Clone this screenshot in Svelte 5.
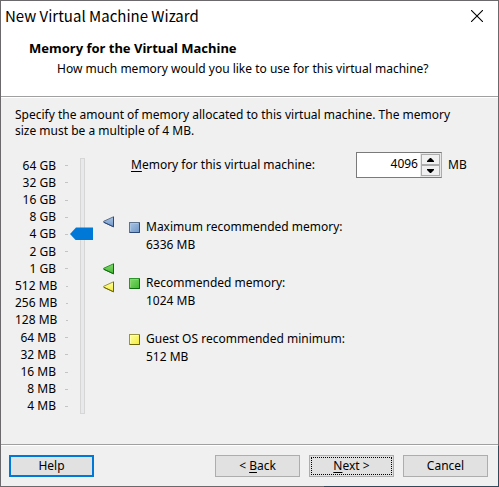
<script>
  const sizes = [
    '64 GB', '32 GB', '16 GB', '8 GB', '4 GB', '2 GB', '1 GB', '512 MB',
    '256 MB', '128 MB', '64 MB', '32 MB', '16 MB', '8 MB', '4 MB'
  ];

  const hints = [
    { id: 'blue', label: 'Maximum recommended memory:', value: '6336 MB', level: 10.75, light: '#a9c4e4', mid: '#6f97c8', edge: '#5f728e', dark: '#2b4878' },
    { id: 'green', label: 'Recommended memory:', value: '1024 MB', level: 8, light: '#86d86f', mid: '#3fb830', edge: '#2c962a', dark: '#0f6a0f' },
    { id: 'yellow', label: 'Guest OS recommended minimum:', value: '512 MB', level: 7, light: '#ffffa8', mid: '#f3ec35', edge: '#9a9440', dark: '#6a6608' }
  ];

  let level = $state(10);
  let memory = $state(4096);

  const slide = () => (memory = 4 * 2 ** level);
  const step = (amount) => (memory = Math.max(4, memory + amount));
</script>

<main class="dialog">
  <header>
    <div class="titlebar">
      <span class="title">New Virtual Machine Wizard</span>
      <button class="close" aria-label="Close">
        <svg width="12" height="12" viewBox="0 0 12 12"><path d="M0 0L12 12M12 0L0 12" stroke="#000" stroke-width="1.1" /></svg>
      </button>
    </div>
    <h1>Memory for the Virtual Machine</h1>
    <p class="question">How much memory would you like to use for this virtual machine?</p>
  </header>

  <section class="body">
    <p class="intro">Specify the amount of memory allocated to this virtual machine. The memory size must be a multiple of 4 MB.</p>

    <div class="content">
      <div class="scale">
        <ol class="sizes">
          {#each sizes as size}
            <li><span>{size}</span><i></i></li>
          {/each}
        </ol>
        <input class="slider" type="range" min="0" max="14" aria-label="Memory size" bind:value={level} oninput={slide} />
        <div class="markers">
          {#each hints as hint}
            <svg class="marker" style="top: {((14 - hint.level) / 14) * 100}%" width="11" height="12" viewBox="0 0 11 12">
              <defs>
                <linearGradient id="arrow-{hint.id}" x1="0" y1="0" x2="0" y2="1">
                  <stop offset="0" stop-color={hint.light} />
                  <stop offset="1" stop-color={hint.mid} />
                </linearGradient>
              </defs>
              <path d="M10.5 .8V10.8L.6 6.3V5.3z" fill="url(#arrow-{hint.id})" stroke={hint.edge} />
              <path d="M10.5 .8V10.8L1 6.3" fill="none" stroke={hint.dark} />
            </svg>
          {/each}
        </div>
      </div>

      <div class="settings">
        <div class="field">
          <label for="memory"><u>M</u>emory for this virtual machine:</label>
          <div class="spinner">
            <input id="memory" type="text" inputmode="numeric" bind:value={memory} />
            <div class="arrows">
              <button aria-label="Increase" onclick={() => step(4)}>
                <svg width="7" height="4" viewBox="0 0 7 4"><path d="M0 4V3L3 0H4L7 3V4z" /></svg>
              </button>
              <button aria-label="Decrease" onclick={() => step(-4)}>
                <svg width="7" height="4" viewBox="0 0 7 4"><path d="M0 0V1L3 4H4L7 1V0z" /></svg>
              </button>
            </div>
          </div>
          <span>MB</span>
        </div>

        <dl>
          {#each hints as hint}
            <div class="hint">
              <svg width="11" height="11" viewBox="0 0 11 11">
                <defs>
                  <linearGradient id="box-{hint.id}" x1="0" y1="0" x2="1" y2="1">
                    <stop offset="0" stop-color={hint.light} />
                    <stop offset="1" stop-color={hint.mid} />
                  </linearGradient>
                </defs>
                <rect x=".5" y=".5" width="10" height="10" fill="url(#box-{hint.id})" stroke={hint.edge} />
                <path d="M10.5 1V10.5H1" fill="none" stroke={hint.dark} />
                <path d="M1.5 9V1.5H9" fill="none" stroke={hint.light} />
              </svg>
              <div>
                <dt>{hint.label}</dt>
                <dd>{hint.value}</dd>
              </div>
            </div>
          {/each}
        </dl>
      </div>
    </div>
  </section>

  <footer>
    <button class="action default">Help</button>
    <button class="action push">&lt; <u>B</u>ack</button>
    <button class="action focused"><u>N</u>ext &gt;</button>
    <button class="action">Cancel</button>
  </footer>
</main>

<style>
  .dialog {
    box-sizing: border-box;
    min-height: 100vh;
    display: flex;
    flex-direction: column;
    border: 1px solid transparent;
    background:
      linear-gradient(#f0f0f0, #f0f0f0) padding-box,
      linear-gradient(#33495a, #33495a) right bottom / 1px 41px no-repeat border-box,
      linear-gradient(#33495a, #33495a) right bottom / 35% 1px no-repeat border-box,
      linear-gradient(#6b696b, #6b696b) border-box;
    color: #000;
    font: 12px/16px 'Noto Sans', sans-serif;
  }
  h1, p, ol, dl, dd {
    margin: 0;
    padding: 0;
  }
  button, input {
    box-sizing: border-box;
    margin: 0;
    padding: 0;
    border: 0;
    color: inherit;
    font: inherit;
  }
  u {
    text-underline-offset: 2px;
  }

  header {
    padding-bottom: 19px;
    border-bottom: 1px solid #a0a0a0;
    background: #fff;
  }
  .titlebar {
    display: flex;
    align-items: center;
    justify-content: space-between;
    height: 30px;
    padding: 0 15px 0 4px;
  }
  .title {
    font: 15px/20px 'Noto Sans CJK KR', sans-serif;
  }
  .close {
    display: flex;
    background: none;
  }
  h1 {
    padding: 9px 0 0 28px;
    font-size: 13px;
    line-height: 16px;
  }
  .question {
    padding: 5px 0 0 56px;
  }

  .body {
    flex: 1;
    padding: 9px 14px;
    border-top: 1px solid #fff;
  }
  .intro {
    padding-right: 20px;
  }
  .content {
    display: flex;
    gap: 15px;
    padding-top: 18px;
  }
  .scale {
    display: flex;
  }
  .sizes {
    display: flex;
    flex-direction: column;
    width: 53px;
    height: 258px;
    list-style: none;
  }
  .sizes li {
    flex: 1;
    display: flex;
    align-items: center;
    justify-content: flex-end;
    gap: 9px;
    white-space: nowrap;
  }
  .sizes i {
    width: 3px;
    height: 1px;
    background: #c4c4c4;
  }
  .slider {
    appearance: none;
    writing-mode: vertical-lr;
    direction: rtl;
    width: 23px;
    height: 256px;
    margin: 1px 0 0 2px;
    background:
      linear-gradient(#e7eaea, #e7eaea) 11px 1px / 3px 254px no-repeat,
      linear-gradient(#d6d6d6, #d6d6d6) 10px 0 / 5px 256px no-repeat;
  }
  .slider::-webkit-slider-thumb {
    appearance: none;
    width: 23px;
    height: 13px;
    background: #0078d7;
    clip-path: polygon(0 50%, 6px 0, 100% 0, 100% 100%, 6px 100%);
  }
  .markers {
    position: relative;
    width: 11px;
    height: 241px;
    margin: 9px 0 0 10px;
  }
  .marker {
    position: absolute;
    left: 0;
    transform: translateY(-50%);
  }

  .settings {
    flex: 1;
  }
  .field {
    display: flex;
    align-items: center;
    padding-left: 2px;
    margin-top: -5px;
  }
  .field label {
    width: 225px;
  }
  .spinner {
    box-sizing: border-box;
    display: flex;
    width: 86px;
    height: 26px;
    margin-right: 6px;
    border: 1px solid #7a7a7a;
    border-right-color: #acacac;
    background: #fff;
  }
  .spinner input {
    flex: 1;
    min-width: 0;
    padding: 0 2px 2px 0;
    background: none;
    text-align: right;
  }
  .arrows {
    display: flex;
    flex-direction: column;
    width: 21px;
    padding: 1px;
    box-sizing: border-box;
    background: #e8e8e8;
  }
  .arrows button {
    flex: 1;
    display: flex;
    align-items: center;
    justify-content: center;
    border: 1px solid #acacac;
    background: #f0f0f0;
  }

  dl {
    display: flex;
    flex-direction: column;
    gap: 20px;
    padding-top: 40px;
    line-height: 18px;
  }
  .hint {
    display: flex;
    gap: 6px;
  }
  .hint svg {
    margin-top: 4px;
  }

  footer {
    display: flex;
    gap: 9px;
    padding: 10px 10px 9px 8px;
    border-top: 1px solid #a0a0a0;
    box-shadow: inset 0 1px #fff;
  }
  .action {
    width: 85px;
    height: 22px;
    border: 1px solid #adadad;
    background: #e1e1e1;
  }
  .push {
    margin-left: auto;
  }
  .default {
    border: 2px solid #0078d7;
  }
  .focused {
    outline: 1px dotted #000;
    outline-offset: -3px;
  }
</style>
